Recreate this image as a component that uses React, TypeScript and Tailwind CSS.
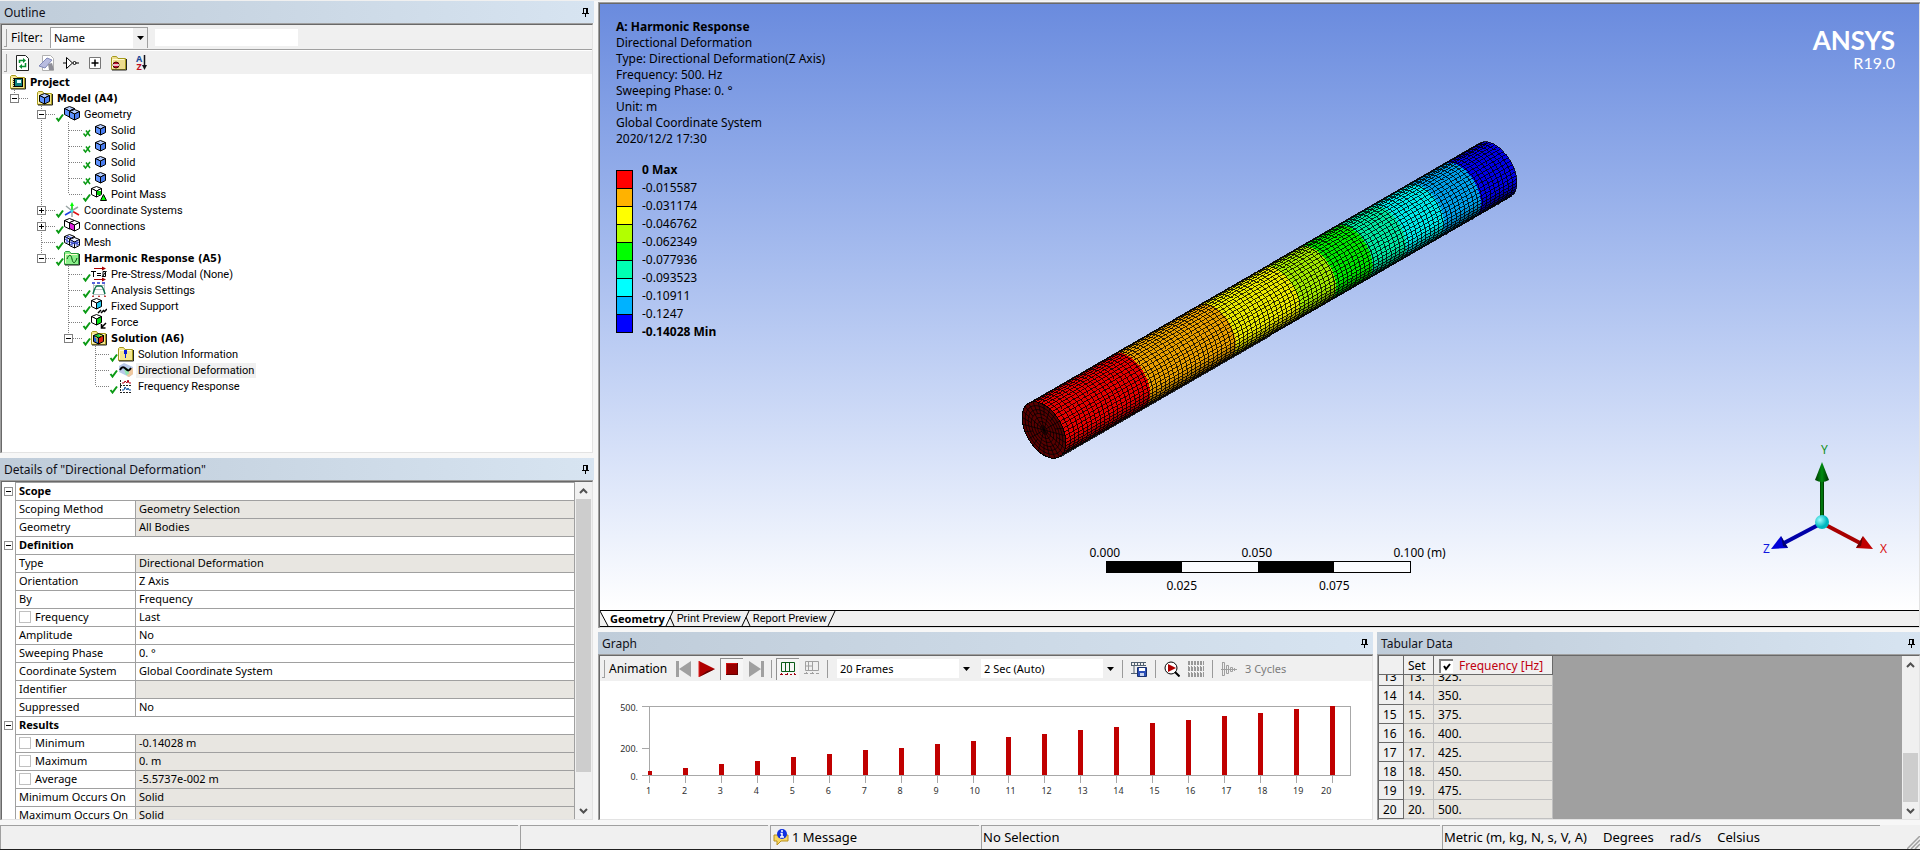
import React, { useState } from 'react';
import clsx from 'clsx';

type Mark = 'check' | 'suppressed';

interface TreeItem {
  label: string;
  icon: React.ReactNode;
  // one entry per level: what the guide column draws
  guides: ('none' | 'line' | 'tee' | 'end')[];
  expander?: 'plus' | 'minus';
  mark?: Mark;
  bold?: boolean;
  selected?: boolean;
}

interface DetailRow {
  label: string;
  value?: string;
  group?: boolean;
  check?: boolean;
  readOnly?: boolean;
}

const UI = "font-['Noto_Sans','Noto_Sans_CJK_SC',sans-serif]";
const TREE = "font-['Roboto','Noto_Sans',sans-serif]";
const TREE_BOLD = "font-['DejaVu_Sans_Condensed','Noto_Sans',sans-serif] font-bold";

/* ---------- icons ---------- */

const Icon: React.FC<{ children: React.ReactNode; size?: number }> = ({ children, size = 16 }) => (
  <svg width={size} height={size} viewBox={`0 0 ${size} ${size}`} className="shrink-0" aria-hidden="true">
    {children}
  </svg>
);

interface CubeProps {
  x?: number;
  y?: number;
  left?: string;
  top?: string;
  right?: string;
}

const Cube: React.FC<CubeProps> = ({ x = 0, y = 0, left = '#5f93ff', top = '#b4ccff', right = '#4a7df0' }) => (
  <g transform={`translate(${x} ${y})`} stroke="#000" strokeWidth="1" strokeLinejoin="round">
    <path d="M.5 2.500 5.500.5l5 2-5 2.500z" fill={top} />
    <path d="M.5 2.500l5 2.500v6l-5-2.500z" fill={left} />
    <path d="M10.500 2.500l-5 2.500v6l5-2.500z" fill={right} />
  </g>
);

const Folder: React.FC<{ fill?: string; edge?: string; children?: React.ReactNode }> = ({
  fill = '#f5e58c',
  edge = '#a59a1c',
  children,
}) => (
  <Icon>
    <path d="M.5 14.500V2.500l1-1h4l1.500 2h7.500v11z" fill={fill} stroke={edge} />
    <path d="M1 15h14.500V4" fill="none" stroke="#222" />
    <path d="M1.500 13V4.500H13" fill="none" stroke="#fffbd0" />
    {children}
  </Icon>
);

const ProjectIcon = () => (
  <Folder>
    <rect x="4.500" y="4.500" width="8" height="8" fill="#0e7f80" stroke="#000" />
    <path d="M3.500 4v10" stroke="#222" strokeWidth="1" strokeDasharray="1 1" />
    <rect x="7" y="6" width="4" height="3" fill="#e8ffff" />
  </Folder>
);

const ModelIcon = () => (
  <Folder>
    <Cube x={2} y={3} />
  </Folder>
);

const GeometryIcon = () => (
  <Icon>
    <Cube x={0} y={0} />
    <Cube x={5} y={3} />
  </Icon>
);

const SolidIcon = () => (
  <Icon>
    <Cube x={4} y={2} />
  </Icon>
);

const PointMassIcon = () => (
  <Icon>
    <Cube x={0} y={0} left="#fff" top="#fff" right="#fff" />
    <path d="M6 5h4v4H6z" fill="#0c0" />
    <path d="M12.500 8.500l3 6h-6z" fill="#0f0" stroke="#000" />
  </Icon>
);

const CoordIcon = () => (
  <Icon>
    <path d="M2 4l5 4M14 5L9 8M8 10v5" stroke="#9aa5a5" strokeWidth="1.500" />
    <path d="M8 9V2" stroke="#0c0" strokeWidth="1.500" />
    <path d="M8 0l2 4H6z" fill="#0f0" />
    <path d="M8 9l-7 4" stroke="#1b3fe0" strokeWidth="1.500" />
    <path d="M8 9l7 4" stroke="#e01010" strokeWidth="1.500" />
    <circle cx="8" cy="9" r="1.500" fill="#3de0e0" />
  </Icon>
);

const ConnectionsIcon = () => (
  <Icon>
    <Cube x={0} y={0} left="#fff" top="#fff" right="#e020e0" />
    <Cube x={5} y={2} left="#e020e0" top="#fff" right="#fff" />
  </Icon>
);

const MeshIcon = () => (
  <Icon>
    <Cube x={0} y={0} left="#eef1ff" top="#eef1ff" right="#eef1ff" />
    <Cube x={5} y={3} left="#eef1ff" top="#eef1ff" right="#eef1ff" />
    <path d="M1 5l4 3M3 3v6M8 6v6M13 6v6M6 8l5 2 4-2M6 11l5-3 4 3M3 2l5 2" stroke="#3346c8" strokeWidth="1" fill="none" />
  </Icon>
);

const HarmonicIcon = () => (
  <Folder fill="#8cf08c" edge="#2c9c3c">
    <path d="M3 9c2-5 4-5 5 0s3 5 5-1" fill="none" stroke="#06540c" strokeWidth="1" />
  </Folder>
);

const PreStressIcon = () => (
  <Icon>
    <path d="M3 2.500h9M3 13.500h9" stroke="#a00" />
    <path d="M11 .5l4 2-4 2zM11 11.500l4 2-4 2z" fill="#a00" />
    <path d="M0 5.500h5M2.500 5v6M6 7.500h4M6 9.500h4M12 5.500h2.500v5H12zM11 11l4.500-6" stroke="#000" fill="none" />
  </Icon>
);

const AnalysisIcon = () => (
  <Icon>
    <path d="M2.500 2v12M13.500 2v12M2 7.500h12M2 12.500h12M2 3.500h12" stroke="#b8c4c4" />
    <path d="M1 1h3M6 1h3M11 1h3" stroke="#2030d0" strokeWidth="1.500" />
    <path d="M2 12c2-7 3-8 4-8h4c1 0 2 1 4 8" fill="none" stroke="#087048" strokeWidth="1.500" />
    <path d="M1 15l1-2 1 2zM7 15l1-2 1 2zM13 15l1-2 1 2z" fill="#a00" />
  </Icon>
);

const FixedIcon = () => (
  <Icon>
    <Cube left="#fff" top="#fff" right="#22c8f0" />
    <path d="M7 15l3-3M10 15l3-3M13 14l3-3" stroke="#000" strokeWidth="1.500" />
  </Icon>
);

const ForceIcon = () => (
  <Icon>
    <Cube left="#fff" top="#fff" right="#00e010" />
    <path d="M15 9l-4 4M10.500 10v4h4" stroke="#000" strokeWidth="1.500" fill="none" />
  </Icon>
);

const SolutionIcon = () => (
  <Folder>
    <Cube x={2} y={3} left="#2060e0" top="#20d040" right="#e02010" />
    <path d="M4 7l2 1v4M8 5l3 1" stroke="#f0e020" fill="none" />
  </Folder>
);

const SolutionInfoIcon = () => (
  <Folder>
    <path d="M7.500 4v4" stroke="#0a18d8" strokeWidth="3" />
    <path d="M7.500 7v5" stroke="#0a18d8" strokeWidth="1" />
  </Folder>
);

const DeformationIcon = () => (
  <Icon>
    <path d="M1 4l5-3 9 4v7l-4 3L1 10z" fill="#b9c9e8" />
    <path d="M9 8l6-2v6l-4 3-2-1z" fill="#f0c8a0" />
    <path d="M6 7l4-1 1 6-3 1z" fill="#90e8b0" />
    <path d="M2 8c2-4 4-3 6-1s3 2 5-1" fill="none" stroke="#000" strokeWidth="2" />
  </Icon>
);

const FrequencyIcon = () => (
  <Icon>
    <path d="M2.500 2v13M2 7.500h12M2 14.500h12" stroke="#222" strokeDasharray="2 1" />
    <path d="M4 5h2l1-2 2 2 1-3 1 3h2" fill="none" stroke="#b00018" />
    <path d="M4 12h2l1-3 2 3 1-2 1 2h2" fill="none" stroke="#1050a0" />
  </Icon>
);

const PinIcon = () => (
  <svg width="8" height="10" viewBox="0 0 8 10" aria-hidden="true" shapeRendering="crispEdges">
    <path d="M1.500 5V.5h4V5" fill="none" stroke="#000" />
    <path d="M4.500 0v5M0 5.500h7M3.500 6v3" stroke="#000" />
  </svg>
);

const Chevron: React.FC<{ down?: boolean }> = ({ down }) => (
  <svg width="9" height="6" viewBox="0 0 9 6" aria-hidden="true">
    <path d={down ? 'M1 1l3.500 3.500L8 1' : 'M1 5l3.500-3.500L8 5'} fill="none" stroke="#505050" strokeWidth="2" />
  </svg>
);

/* ---------- shared bits ---------- */

const PanelTitle: React.FC<{ title: string }> = ({ title }) => (
  <div className="flex h-[22px] shrink-0 items-center justify-between bg-linear-to-r from-[#bfccd9] to-[#d7e4f1] pt-0.5 pl-1">
    <h2 className="text-[12px] leading-4 text-[#101018]">{title}</h2>
    <button type="button" aria-label={`Pin ${title}`} className="flex h-4 w-4 items-center justify-center">
      <PinIcon />
    </button>
  </div>
);

const Grip = () => <div className="h-[18px] w-[3px] shrink-0 border-r border-b border-[#a0a0a0]" />;
const Separator = () => <div className="h-[18px] w-px shrink-0 bg-[#9a9a9a]" />;

interface ComboProps {
  label: string;
  options: string[];
  className?: string;
}

const Combo: React.FC<ComboProps> = ({ label, options, className }) => (
  <div className={clsx('relative flex shrink-0', className)}>
    <select
      aria-label={label}
      className="w-full grow appearance-none bg-white pr-4 pl-[3px] text-[11px] leading-4 text-black outline-none"
    >
      {options.map(option => (
        <option key={option}>{option}</option>
      ))}
    </select>
    <span className="pointer-events-none absolute inset-y-0 right-0 flex w-[14px] items-center justify-center bg-[#f0f0f0]">
      <svg width="7" height="4" viewBox="0 0 7 4">
        <path d="M0 0h7L3.500 4z" fill="#000" />
      </svg>
    </span>
  </div>
);

const ScrollBar: React.FC<{ before: string; thumb: string }> = ({ before, thumb }) => (
  <div className="flex w-[17px] shrink-0 flex-col items-center bg-[#f0f0f0]">
    <div className="flex h-[17px] shrink-0 items-center">
      <Chevron />
    </div>
    <div className="flex w-full grow flex-col">
      <div className={before} />
      <div className={clsx('mx-px bg-[#cdcdcd]', thumb)} />
    </div>
    <div className="flex h-[17px] shrink-0 items-center">
      <Chevron down />
    </div>
  </div>
);

/* ---------- outline ---------- */

const TREE_ITEMS: TreeItem[] = [
  { label: 'Project', icon: <ProjectIcon />, guides: [], bold: true },
  { label: 'Model (A4)', icon: <ModelIcon />, guides: ['end'], expander: 'minus', bold: true },
  { label: 'Geometry', icon: <GeometryIcon />, guides: ['none', 'tee'], expander: 'minus', mark: 'check' },
  { label: 'Solid', icon: <SolidIcon />, guides: ['none', 'line', 'tee'], mark: 'suppressed' },
  { label: 'Solid', icon: <SolidIcon />, guides: ['none', 'line', 'tee'], mark: 'suppressed' },
  { label: 'Solid', icon: <SolidIcon />, guides: ['none', 'line', 'tee'], mark: 'suppressed' },
  { label: 'Solid', icon: <SolidIcon />, guides: ['none', 'line', 'tee'], mark: 'suppressed' },
  { label: 'Point Mass', icon: <PointMassIcon />, guides: ['none', 'line', 'end'], mark: 'check' },
  { label: 'Coordinate Systems', icon: <CoordIcon />, guides: ['none', 'tee'], expander: 'plus', mark: 'check' },
  { label: 'Connections', icon: <ConnectionsIcon />, guides: ['none', 'tee'], expander: 'plus', mark: 'check' },
  { label: 'Mesh', icon: <MeshIcon />, guides: ['none', 'tee'], mark: 'check' },
  { label: 'Harmonic Response (A5)', icon: <HarmonicIcon />, guides: ['none', 'end'], expander: 'minus', mark: 'check', bold: true },
  { label: 'Pre-Stress/Modal (None)', icon: <PreStressIcon />, guides: ['none', 'none', 'tee'], mark: 'check' },
  { label: 'Analysis Settings', icon: <AnalysisIcon />, guides: ['none', 'none', 'tee'], mark: 'check' },
  { label: 'Fixed Support', icon: <FixedIcon />, guides: ['none', 'none', 'tee'], mark: 'check' },
  { label: 'Force', icon: <ForceIcon />, guides: ['none', 'none', 'tee'], mark: 'check' },
  { label: 'Solution (A6)', icon: <SolutionIcon />, guides: ['none', 'none', 'end'], expander: 'minus', mark: 'check', bold: true },
  { label: 'Solution Information', icon: <SolutionInfoIcon />, guides: ['none', 'none', 'none', 'tee'], mark: 'check' },
  { label: 'Directional Deformation', icon: <DeformationIcon />, guides: ['none', 'none', 'none', 'tee'], mark: 'check', selected: true },
  { label: 'Frequency Response', icon: <FrequencyIcon />, guides: ['none', 'none', 'none', 'end'], mark: 'check' },
];

interface GuideProps {
  kind: 'none' | 'line' | 'tee' | 'end';
  expander?: 'plus' | 'minus';
  mark?: Mark;
}

const Guide: React.FC<GuideProps> = ({ kind, expander, mark }) => (
  <svg width="27" height="16" viewBox="0 0 27 16" className="shrink-0 overflow-visible" aria-hidden="true">
    <g stroke="#808080" strokeDasharray="1 1" shapeRendering="crispEdges">
      {(kind === 'line' || kind === 'tee') && <path d="M4.500 0v16" />}
      {kind === 'end' && <path d="M4.500 0v8" />}
      {(kind === 'tee' || kind === 'end') && <path d="M5 8.500h14" />}
    </g>
    {expander && (
      <g shapeRendering="crispEdges">
        <rect x="0.500" y="4.500" width="8" height="8" fill="#fff" stroke="#808080" />
        <path d={expander === 'plus' ? 'M2 8.500h5M4.500 6v5' : 'M2 8.500h5'} stroke="#000" />
      </g>
    )}
    {mark === 'check' && <path d="M19.500 12l2 2.500 4.500-6" fill="none" stroke="#0a9a14" strokeWidth="2" />}
    {mark === 'suppressed' && (
      <path d="M19.500 11.500l2 2.500 4.500-6M22 8.500l4 5.500" fill="none" stroke="#0a9a14" strokeWidth="1.500" />
    )}
  </svg>
);

const OutlinePanel = () => (
  <section className="flex h-[452px] shrink-0 flex-col">
    <PanelTitle title="Outline" />
    <div className="mr-px flex min-h-0 grow flex-col border-t border-l border-[#a0a0a0]">
      <div className="flex min-h-0 grow flex-col border-t border-r border-b border-l border-t-[#696969] border-r-[#e3e3e3] border-b-[#e3e3e3] border-l-[#696969] bg-white">
        <div className="flex h-[25px] shrink-0 items-center border-b border-[#a0a0a0] bg-[#f0f0f0] pt-px pl-[2px]">
          <Grip />
          <label htmlFor="filter-text" className="w-[43px] pl-1 text-[12px] leading-4">
            Filter:
          </label>
          <Combo
            label="Filter by"
            options={['Name', 'Type', 'State']}
            className="h-[21px] w-[98px] border-t border-r border-l border-[#a0a0a0]"
          />
          <input id="filter-text" type="text" className="ml-[7px] h-[17px] w-[143px] bg-white text-[11px] outline-none" />
        </div>
        <div className="flex h-6 shrink-0 items-center border-t border-white bg-[#f0f0f0] pl-[2px]">
          <Grip />
          <div className="flex items-center gap-2 pl-2">
            <button type="button" aria-label="Refresh tree">
              <Icon>
                <path d="M1.500.5h9l3 3v12h-12z" fill="#fff" stroke="#222" />
                <path d="M4.500 8V5.500H9M10.500 8v3.500H6" fill="none" stroke="#089030" strokeWidth="1.500" />
                <path d="M8 3l3 2.500L8 8zM7 9l-3 2.500L7 14z" fill="#089030" />
              </Icon>
            </button>
            <button type="button" aria-label="Clear">
              <Icon>
                <path d="M3.500.5h8l3 3v12h-11z" fill="#fff" stroke="#b0b0b0" />
                <path d="M0 11l8-8 5 2-7 8z" fill="#b8bce0" stroke="#8088b8" />
                <path d="M9 9l4-1 2 7h-5z" fill="#8e8e98" />
              </Icon>
            </button>
            <button type="button" aria-label="Go to">
              <Icon>
                <path d="M3.500 2.500v11L9.500 8z" fill="#fff" stroke="#000" />
                <path d="M0 8h3M13 8h3" stroke="#000" />
                <circle cx="11.500" cy="8" r="1.500" fill="#fff" stroke="#000" />
              </Icon>
            </button>
            <button type="button" aria-label="Expand all">
              <Icon>
                <path d="M2.500 2.500h11v11h-11z" fill="#fff" stroke="#777" />
                <path d="M4.500 8h7M8 4.500v7" stroke="#000" strokeWidth="1.500" />
              </Icon>
            </button>
            <button type="button" aria-label="Hide folders">
              <Folder fill="#eddc8e">
                <circle cx="5" cy="10" r="3" fill="#c01030" stroke="#400" />
                <path d="M2 10h6" stroke="#fff" strokeWidth="1.500" />
              </Folder>
            </button>
            <button type="button" aria-label="Sort" className="flex h-4 w-4 items-center pl-px">
              <span className="flex flex-col text-[9px] leading-[8px] font-bold">
                <span className="text-[#1c4a98]">A</span>
                <span className="text-[#c01020]">Z</span>
              </span>
              <svg width="5" height="15" viewBox="0 0 5 15">
                <path d="M2.500 0v12" stroke="#101018" strokeWidth="1.500" />
                <path d="M0 10h5l-2.500 5z" fill="#101018" />
              </svg>
            </button>
          </div>
        </div>
        <ul className="overflow-hidden pl-2">
          {TREE_ITEMS.map((item, index) => (
            <li key={index} className="flex h-4 items-center">
              {item.guides.map((kind, level) => {
                const own = level === item.guides.length - 1;
                return <Guide key={level} kind={kind} expander={own ? item.expander : undefined} mark={own ? item.mark : undefined} />;
              })}
              {item.icon}
              <span
                className={clsx(
                  'ml-[2px] px-[2px] text-[11px] leading-[15px] whitespace-nowrap',
                  item.bold ? TREE_BOLD : TREE,
                  item.selected && 'bg-[#f0f0f0]'
                )}
              >
                {item.label}
              </span>
            </li>
          ))}
        </ul>
      </div>
    </div>
  </section>
);

/* ---------- details ---------- */

const DETAILS: DetailRow[] = [
  { label: 'Scope', group: true },
  { label: 'Scoping Method', value: 'Geometry Selection', readOnly: true },
  { label: 'Geometry', value: 'All Bodies', readOnly: true },
  { label: 'Definition', group: true },
  { label: 'Type', value: 'Directional Deformation', readOnly: true },
  { label: 'Orientation', value: 'Z Axis' },
  { label: 'By', value: 'Frequency' },
  { label: 'Frequency', value: 'Last', check: true },
  { label: 'Amplitude', value: 'No' },
  { label: 'Sweeping Phase', value: '0. °' },
  { label: 'Coordinate System', value: 'Global Coordinate System' },
  { label: 'Identifier', value: '', readOnly: true },
  { label: 'Suppressed', value: 'No' },
  { label: 'Results', group: true },
  { label: 'Minimum', value: '-0.14028 m', check: true, readOnly: true },
  { label: 'Maximum', value: '0. m', check: true, readOnly: true },
  { label: 'Average', value: '-5.5737e-002 m', check: true, readOnly: true },
  { label: 'Minimum Occurs On', value: 'Solid', readOnly: true },
  { label: 'Maximum Occurs On', value: 'Solid', readOnly: true },
];

const DetailsPanel = () => (
  <section className="flex min-h-0 grow flex-col">
    <PanelTitle title={'Details of "Directional Deformation"'} />
    <div className="mr-px flex min-h-0 grow border-t border-l border-[#a0a0a0]">
      <div className="flex min-h-0 grow border border-t-[#696969] border-r-[#e3e3e3] border-b-[#e3e3e3] border-l-[#696969] bg-white">
        <div className="h-0 min-h-full grow overflow-hidden">
          <table className="w-full table-fixed border-separate border-spacing-0 text-[11px] leading-[15px]">
            <colgroup>
              <col className="w-[13px]" />
              <col className="w-[120px]" />
              <col />
            </colgroup>
            <tbody>
              {DETAILS.map(row => (
                <tr key={row.label} className="h-[18px]">
                  <td className="p-0">
                    {row.group && (
                      <button type="button" aria-label={`Collapse ${row.label}`} className="ml-[2px] flex">
                        <svg width="9" height="9" viewBox="0 0 9 9" shapeRendering="crispEdges">
                          <rect x="0.500" y="0.500" width="8" height="8" fill="#fff" stroke="#909090" />
                          <path d="M2 4.500h5" stroke="#000" />
                        </svg>
                      </button>
                    )}
                  </td>
                  {row.group ? (
                    <th colSpan={2} scope="rowgroup" className="border-t border-r border-l border-[#a0a0a0] pt-0 pr-0 pb-[2px] pl-[3px] text-left font-bold">
                      {row.label}
                    </th>
                  ) : (
                    <>
                      <th scope="row" className="border-t border-l border-[#a0a0a0] pt-0 pr-0 pb-[2px] pl-[3px] text-left font-normal whitespace-nowrap">
                        {row.check ? (
                          <label className="flex items-center gap-1">
                            <input type="checkbox" className="h-3 w-3 appearance-none border border-[#c0c0c0] bg-white" />
                            {row.label}
                          </label>
                        ) : (
                          row.label
                        )}
                      </th>
                      <td
                        className={clsx(
                          'border-t border-r border-l border-[#a0a0a0] pt-0 pr-0 pb-[2px] pl-[3px]',
                          row.readOnly && 'bg-[#e8e6e1]'
                        )}
                      >
                        {row.value}
                      </td>
                    </>
                  )}
                </tr>
              ))}
            </tbody>
          </table>
        </div>
        <ScrollBar before="h-0" thumb="h-[90%]" />
      </div>
    </div>
  </section>
);

/* ---------- 3D scene ---------- */

const RADIUS = 31;
const START = { x: 444, y: 426 };
const END = { x: 895, y: 166 };
const FACETS = 24;
const RINGS = 104;

// shaft colour bands, from the fixed end
const BANDS = [
  { to: 0.187, rgb: [230, 0, 0] },
  { to: 0.377, rgb: [232, 158, 0] },
  { to: 0.518, rgb: [232, 232, 0] },
  { to: 0.599, rgb: [160, 232, 0] },
  { to: 0.68, rgb: [0, 230, 0] },
  { to: 0.755, rgb: [0, 230, 160] },
  { to: 0.839, rgb: [0, 232, 232] },
  { to: 0.92, rgb: [0, 158, 232] },
  { to: 1, rgb: [0, 0, 230] },
];

// point on the section at position t, angle in radians from the upper silhouette edge
const sectionPoint = (t: number, angle: number, scale = 1) => {
  const major = -Math.cos(angle) * RADIUS * scale;
  const minor = Math.sin(angle) * RADIUS * 0.577 * scale;
  const x = START.x + (END.x - START.x) * t + major * 0.5 + minor * 0.866;
  const y = START.y + (END.y - START.y) * t + major * 0.866 - minor * 0.5;
  return `${x.toFixed(1)} ${y.toFixed(1)}`;
};

const facetAngle = (i: number) => (Math.PI * i) / FACETS;

const facets = BANDS.flatMap((band, b) => {
  const from = b === 0 ? 0 : BANDS[b - 1].to;
  return Array.from({ length: FACETS }, (_, i) => {
    const a = facetAngle(i);
    const c = facetAngle(i + 1);
    const light = Math.max(0.3, Math.min(1, 0.3 + 1.1 * Math.sin((a + c) / 2 + 0.25)));
    const [r, g, bl] = band.rgb.map(v => Math.round(v * light));
    return {
      d: `M${sectionPoint(from, a)}L${sectionPoint(band.to, a)}L${sectionPoint(band.to, c)}L${sectionPoint(from, c)}z`,
      fill: `rgb(${r},${g},${bl})`,
    };
  });
});

const ringLines = Array.from({ length: RINGS + 1 }, (_, k) =>
  Array.from({ length: FACETS + 1 }, (_, i) => `${i ? 'L' : 'M'}${sectionPoint(k / RINGS, facetAngle(i))}`).join('')
).join('');

const axialLines = Array.from(
  { length: FACETS + 1 },
  (_, i) => `M${sectionPoint(0, facetAngle(i))}L${sectionPoint(1, facetAngle(i))}`
).join('');

const capRing = (scale: number) =>
  Array.from({ length: FACETS * 2 }, (_, i) => `${i ? 'L' : 'M'}${sectionPoint(0, facetAngle(i), scale)}`).join('') + 'z';

const capSpokes = (step: number, from: number, to: number) =>
  Array.from(
    { length: (FACETS * 2) / step },
    (_, i) => `M${sectionPoint(0, facetAngle(i * step), from)}L${sectionPoint(0, facetAngle(i * step), to)}`
  ).join('');

const capLines =
  [0.86, 0.72, 0.58, 0.44, 0.3, 0.15].map(capRing).join('') + capSpokes(2, 0.58, 1) + capSpokes(4, 0, 0.58);

const Shaft = () => (
  <svg viewBox="0 0 1319 606" className="absolute inset-0 h-full w-full" role="img" aria-label="Deformed shaft mesh">
    <g shapeRendering="crispEdges">
      {facets.map((facet, i) => (
        <path key={i} d={facet.d} fill={facet.fill} />
      ))}
      <path d={ringLines + axialLines} fill="none" stroke="#000" strokeWidth="0.800" />
      <path d={capRing(1)} fill="#580000" stroke="#000" />
    </g>
    <path d={capLines} fill="none" stroke="#000" strokeWidth="0.800" />
  </svg>
);

const LEGEND = ['#ff0000', '#ffb200', '#ffff00', '#b2ff00', '#00ff00', '#00ffb2', '#00ffff', '#00b2ff', '#0000ff'];
const LEGEND_LABELS = [
  '0 Max', '-0.015587', '-0.031174', '-0.046762', '-0.062349',
  '-0.077936', '-0.093523', '-0.10911', '-0.1247', '-0.14028 Min',
];

const RESULT_INFO = [
  'Directional Deformation',
  'Type: Directional Deformation(Z Axis)',
  'Frequency: 500. Hz',
  'Sweeping Phase: 0. °',
  'Unit: m',
  'Global Coordinate System',
  '2020/12/2 17:30',
];

const Triad = () => (
  <svg width="136" height="128" viewBox="0 -8 136 128" className="absolute right-[28px] bottom-[44px]" aria-hidden="true">
    <defs>
      <linearGradient id="axis-y">
        <stop offset="0" stopColor="#003800" />
        <stop offset="0.500" stopColor="#008c10" />
        <stop offset="1" stopColor="#002800" />
      </linearGradient>
      <radialGradient id="origin" cx="0.350" cy="0.350">
        <stop offset="0" stopColor="#a0ffff" />
        <stop offset="1" stopColor="#00b8c0" />
      </radialGradient>
    </defs>
    <rect x="65" y="34" width="4" height="43" fill="url(#axis-y)" />
    <path d="M67 16l7 18q-7 4-14 0z" fill="url(#axis-y)" />
    <path d="M67 77l38 20" stroke="#a80000" strokeWidth="4" />
    <path d="M118 103l-17-1 7-12z" fill="#c00000" />
    <path d="M101 102l7-12-2 10z" fill="#600" />
    <path d="M67 77L29 97" stroke="#0000a8" strokeWidth="4" />
    <path d="M16 103l17-1-7-12z" fill="#0000d8" />
    <path d="M33 102l-7-12 2 10z" fill="#000070" />
    <circle cx="67" cy="76" r="7" fill="url(#origin)" />
    <text x="66" y="8" fontSize="12" fill="#109018" fontFamily="Noto Sans">Y</text>
    <text x="125" y="107" fontSize="12" fill="#d81010" fontFamily="Noto Sans">X</text>
    <text x="8" y="107" fontSize="12" fill="#1018e0" fontFamily="Noto Sans">Z</text>
  </svg>
);

const ScaleBar = () => (
  <div className="absolute bottom-[16px] left-1/2 ml-[-170px] w-[380px] text-[12px] leading-4">
    <div className="grid grid-cols-[152px_152px_auto]">
      <span>0.000</span>
      <span>0.050</span>
      <span>0.100 (m)</span>
    </div>
    <div className="ml-[16px] grid h-3 w-[305px] grid-cols-4 border border-black bg-white/50">
      <div className="bg-black" />
      <div />
      <div className="bg-black" />
      <div />
    </div>
    <div className="mt-[5px] ml-[16px] flex w-[305px] justify-around">
      <span>0.025</span>
      <span>0.075</span>
    </div>
  </div>
);

const VIEW_TABS = ['Geometry', 'Print Preview', 'Report Preview'];

const Viewport = () => {
  const [active, setActive] = useState('Geometry');

  return (
    <section className="mt-px flex min-h-0 grow flex-col border-t border-l border-[#a0a0a0]">
      <div className="flex min-h-0 grow flex-col border-t border-r border-b border-l border-t-[#696969] border-r-[#e3e3e3] border-b-[#e3e3e3] border-l-[#696969]">
        <div className="relative min-h-0 grow overflow-hidden bg-linear-to-b from-[#6a8bde] to-white pt-[15px] pl-4">
          <Shaft />
          <div className="relative text-[12px] leading-4">
            <p className="font-bold">A: Harmonic Response</p>
            {RESULT_INFO.map(line => (
              <p key={line}>{line}</p>
            ))}
          </div>
          <div className="relative mt-4 flex">
            <div className="mt-[7px] flex h-[163px] w-[17px] flex-col border border-black">
              {LEGEND.map((color, i) => (
                <div key={color} className={clsx('flex-1', i > 0 && 'border-t border-black')} style={{ backgroundColor: color }} />
              ))}
            </div>
            <ul className="-mt-px ml-[9px] flex h-[178px] flex-col justify-between text-[12px] leading-4">
              {LEGEND_LABELS.map((label, i) => (
                <li key={label} className={clsx((i === 0 || i === LEGEND_LABELS.length - 1) && 'font-bold')}>
                  {label}
                </li>
              ))}
            </ul>
          </div>
          <div className="absolute top-[20px] right-[24px] text-right font-['Lato','Noto_Sans',sans-serif] text-white">
            <div className="text-[26px] leading-[32px] font-bold">ANSYS</div>
            <div className="text-[16px] leading-[14px]">R19.0</div>
          </div>
          <ScaleBar />
          <Triad />
        </div>
        <div className="flex h-[17px] shrink-0 border-t border-b border-black bg-[#f0f0f0]" role="tablist">
          {VIEW_TABS.map((tab, i) => (
            <button
              key={tab}
              type="button"
              role="tab"
              aria-selected={tab === active}
              onClick={() => setActive(tab)}
              className={clsx(
                'relative flex h-[15px] items-center text-[11px] leading-[14px] whitespace-nowrap',
                i === 0 && 'pl-[10px]',
                tab === active ? 'bg-white font-bold' : `${TREE} bg-[#f0f0f0]`
              )}
            >
              {i === 0 && (
                <svg width="9" height="15" viewBox="0 0 9 15" className="absolute top-0 left-0">
                  <path d="M0 0v15h8z" fill="#f0f0f0" />
                  <path d="M0 0l8 15" stroke="#000" />
                </svg>
              )}
              {tab}
              <svg width="12" height="15" viewBox="0 0 12 15">
                <path d="M8 0L1 15h11V0z" fill="#f0f0f0" />
                <path d="M8 0L1 15" stroke="#000" />
                {i < VIEW_TABS.length - 1 && <path d="M5 6l4 9" stroke="#000" />}
              </svg>
            </button>
          ))}
        </div>
      </div>
    </section>
  );
};

/* ---------- graph ---------- */

const FREQUENCIES = Array.from({ length: 20 }, (_, i) => (i + 1) * 25);

const Chart = () => (
  <svg viewBox="0 0 773 137" className="min-h-0 w-full grow" role="img" aria-label="Frequency by set">
    <g stroke="#a8a8a8" shapeRendering="crispEdges">
      <path d="M42 24.500h709.500v70H42M49.500 24v71M42 66.500h7" fill="none" />
      {FREQUENCIES.map((_, i) => (
        <path key={i} d={`M${49.5 + i * 36} 95v7`} />
      ))}
    </g>
    <g fill="#c00000" shapeRendering="crispEdges">
      {FREQUENCIES.map((value, i) => {
        const height = Math.round((value / 500) * 70);
        return <rect key={value} x={i === 0 ? 48 : 47 + i * 36} y={94 - height} width={i === 0 ? 4 : 5} height={height} />;
      })}
    </g>
    <g fontSize="9" fill="#303030" fontFamily="Noto Sans">
      <text x="38" y="29" textAnchor="end">500.</text>
      <text x="38" y="71" textAnchor="end">200.</text>
      <text x="38" y="99" textAnchor="end">0.</text>
      {FREQUENCIES.map((_, i) => (
        <text key={i} x={i === 19 ? 722 : 46 + i * 36} y="113">
          {i + 1}
        </text>
      ))}
    </g>
  </svg>
);

const GraphPanel = () => (
  <section className="flex min-w-0 flex-[775] flex-col">
    <PanelTitle title="Graph" />
    <div className="flex min-h-0 grow border-t border-l border-[#a0a0a0]">
      <div className="flex min-w-0 grow flex-col border border-t-[#696969] border-r-[#e3e3e3] border-b-[#e3e3e3] border-l-[#696969] bg-white">
        <div className="flex h-[25px] shrink-0 items-center bg-[#f0f0f0] pl-[2px]">
          <Grip />
          <span className="w-[69px] pl-1 text-[12px] leading-4">Animation</span>
          <button type="button" aria-label="Previous frame" className="w-6">
            <Icon size={18}>
              <path d="M2 1h3v16H2zM17 1v16L5 9z" fill="#a0a0a0" />
            </Icon>
          </button>
          <button type="button" aria-label="Play" className="w-[22px]">
            <Icon size={18}>
              <path d="M1 1l16 8L1 17z" fill="#b00000" />
              <path d="M1 17l16-8-8 2z" fill="#600000" />
              <path d="M1 1v16" stroke="#e02020" />
            </Icon>
          </button>
          <button
            type="button"
            aria-label="Stop"
            className="flex h-[22px] w-[23px] items-center justify-center border-t border-l border-[#909090] bg-[#f6f6f6]"
          >
            <Icon size={12}>
              <path d="M0 0h12v12H0z" fill="#980000" />
              <path d="M0 12V0h12" fill="none" stroke="#d01010" strokeWidth="2" />
              <path d="M0 11.500h11.500V0" fill="none" stroke="#600" />
            </Icon>
          </button>
          <button type="button" aria-label="Next frame" className="w-7 pl-[5px]">
            <Icon size={18}>
              <path d="M13 1h3v16h-3zM1 1v16l12-8z" fill="#a0a0a0" />
            </Icon>
          </button>
          <Separator />
          <button
            type="button"
            aria-label="Distributed"
            className="ml-1 flex h-[22px] w-[23px] items-center justify-center border-t border-l border-[#909090] bg-[#f6f6f6]"
          >
            <Icon>
              <path d="M1.500 10.500v-9h13v9zM5.500 1v10M9.500 1v10" fill="none" stroke="#0a5a18" />
              <path d="M0 13.500h3M5 13.500h3M10 13.500h2M14 13.500h2M1.500 12v2M7.500 12v2M14.500 12v2" stroke="#a00010" />
            </Icon>
          </button>
          <button type="button" aria-label="Result sets" className="w-[28px] pl-[5px]">
            <Icon>
              <path d="M1.500 9.500v-9h13v9zM4.500 1v9M8.500 1v9M2 5h6" fill="none" stroke="#a0a0a0" />
              <path d="M0 12.500h4M6 12.500h4M12 12.500h3M2.500 11v2M8.500 11v2" stroke="#a0a0a0" />
            </Icon>
          </button>
          <Separator />
          <Combo label="Frames" options={['20 Frames', '10 Frames', '50 Frames']} className="ml-[9px] h-[19px] w-[136px]" />
          <Combo label="Duration" options={['2 Sec (Auto)', '5 Sec']} className="ml-[8px] h-[19px] w-[136px]" />
          <div className="ml-[5px] flex items-center gap-2 text-[11px] leading-4">
            <Separator />
            <button type="button" aria-label="Export video">
              <Icon>
                <path d="M0 1.500h15M0 4.500h15" stroke="#506070" />
                <path d="M0 3h15" stroke="#506070" strokeWidth="2" strokeDasharray="1 2" />
                <path d="M3 5v7M0 12.500h6" stroke="#506070" />
                <path d="M6.500 6.500h9v9h-9z" fill="#2c50b8" stroke="#18306c" />
                <path d="M8 7h6v3H8z" fill="#fff" />
                <path d="M9 12h4v3H9z" fill="#c8d4f0" />
              </Icon>
            </button>
            <Separator />
            <button type="button" aria-label="Zoom to fit">
              <Icon>
                <circle cx="7" cy="7" r="6" fill="#fff" stroke="#000" />
                <path d="M4 3l8 4-8 4z" fill="#b00000" />
                <path d="M11 11l4.500 4.500" stroke="#000" strokeWidth="2" />
              </Icon>
            </button>
            <button type="button" aria-label="Contour grid">
              <Icon>
                <path d="M0 2h16M0 8h16M0 14h16" stroke="#989898" strokeWidth="4" strokeDasharray="2 1" />
                <path d="M0 5.500h16M0 11.500h16" stroke="#989898" strokeDasharray="1 2" />
              </Icon>
            </button>
            <Separator />
            <button type="button" disabled aria-label="Cycles">
              <Icon>
                <path d="M1.500 1v14M1.500 1.500h2v13h-2M5.500 4.500h2v8h-2zM9.500 6.500h2v4h-2zM0 8.500h16M13.500 7v3" fill="none" stroke="#a0a0a0" />
              </Icon>
            </button>
            <span className="text-[#7c7c7c]">3 Cycles</span>
          </div>
        </div>
        <Chart />
      </div>
    </div>
  </section>
);

/* ---------- tabular data ---------- */

const TabularPanel = () => (
  <section className="flex min-w-0 flex-[543] flex-col">
    <PanelTitle title="Tabular Data" />
    <div className="flex min-h-0 grow border-t border-l border-[#a0a0a0]">
      <div className="flex min-w-0 grow border border-t-[#696969] border-r-[#e3e3e3] border-b-[#e3e3e3] border-l-[#696969] bg-[#a0a0a0]">
        <div className="flex min-h-0 grow flex-col justify-end overflow-hidden">
          <table className="w-[174px] table-fixed border-separate border-spacing-0 text-[12px] leading-4">
            <colgroup>
              <col className="w-[25px]" />
              <col className="w-[30px]" />
              <col />
            </colgroup>
            <thead>
              <tr className="h-[19px] bg-[#f0f0f0]">
                <th aria-label="Row" className="border-r border-b border-[#696969] p-0" />
                <th className="border-r border-b border-[#696969] pt-0.5 pr-0 pb-0 pl-1 text-left font-normal">Set</th>
                <th className="border-r border-b border-[#696969] pt-0.5 pr-0 pb-0 pl-[5px] text-left font-normal">
                  <label className="flex items-center gap-[6px] text-[#c00010]">
                    <span className="relative h-[14px] w-[14px]">
                      <input
                        type="checkbox"
                        defaultChecked
                        className="block h-[14px] w-[14px] appearance-none border-t-2 border-l-2 border-[#808080] bg-white"
                      />
                      <svg width="8" height="8" viewBox="0 0 8 8" className="pointer-events-none absolute top-1 left-1">
                        <path d="M1 3l2 3 4-5" fill="none" stroke="#000" strokeWidth="2" />
                      </svg>
                    </span>
                    Frequency [Hz]
                  </label>
                </th>
              </tr>
            </thead>
            <tbody>
              {FREQUENCIES.slice(12).map((value, i) => (
                <tr key={value} className={i === 0 ? 'h-[11px]' : 'h-[19px]'}>
                  <th scope="row" className="border-r border-b border-[#696969] bg-[#f0f0f0] py-0 pr-0 pl-1 text-left font-normal">
                    <div className={clsx('flex items-end overflow-hidden', i === 0 ? 'h-[10px]' : 'h-[18px]')}>{i + 13}</div>
                  </th>
                  <td className="border-r border-b border-[#c0c0c0] bg-[#e8e6e1] py-0 pr-0 pl-1">
                    <div className={clsx('flex items-end overflow-hidden', i === 0 ? 'h-[10px]' : 'h-[18px]')}>{i + 13}.</div>
                  </td>
                  <td className="border-r border-b border-[#c0c0c0] bg-[#e8e6e1] py-0 pr-0 pl-1">
                    <div className={clsx('flex items-end overflow-hidden', i === 0 ? 'h-[10px]' : 'h-[18px]')}>{value}.</div>
                  </td>
                </tr>
              ))}
            </tbody>
          </table>
        </div>
        <ScrollBar before="grow" thumb="h-[49px]" />
      </div>
    </div>
  </section>
);

/* ---------- status bar ---------- */

const Pane: React.FC<{ className: string; children?: React.ReactNode }> = ({ className, children }) => (
  <div className={clsx('flex h-6 items-center border-t border-l border-[#a0a0a0] pb-px', className)}>{children}</div>
);

const StatusBar = () => (
  <footer className="flex h-[25px] shrink-0 gap-[2px] border-b border-[#202020] bg-[#f0f0f0] text-[13px] leading-4">
    <Pane className="w-[518px]" />
    <Pane className="w-[248px]" />
    <Pane className="w-[209px] gap-[3px] pl-[2px]">
      <Icon>
        <path d="M1 6h14v6H8l-4 4v-4H1z" fill="#f8d860" stroke="#b89020" />
        <circle cx="9" cy="5" r="5" fill="#1030e0" />
        <path d="M9 1v2M7.500 4.500H9V8M7 8h4" stroke="#fff" strokeWidth="1.500" fill="none" />
      </Icon>
      1 Message
    </Pane>
    <Pane className="grow pl-px">No Selection</Pane>
    <Pane className="w-[438px] gap-4 pl-px">
      <span>Metric (m, kg, N, s, V, A)</span>
      <span>Degrees</span>
      <span>rad/s</span>
      <span>Celsius</span>
    </Pane>
    <div className="flex w-[38px] items-end justify-end">
      <svg width="13" height="13" viewBox="0 0 13 13" aria-hidden="true">
        <path d="M0 13L13 0M4 13l9-9M8 13l5-5" stroke="#a0a0a0" strokeWidth="1.500" />
      </svg>
    </div>
  </footer>
);

const App: React.FC = () => (
  <div className={`${UI} flex h-screen min-h-[850px] flex-col overflow-hidden bg-[#f7f7f7] text-black`}>
    <main className="flex min-h-0 grow gap-1 border-t border-[#f0f0f0] pb-[5px]">
      <div className="flex w-[594px] shrink-0 flex-col gap-[5px]">
        <OutlinePanel />
        <DetailsPanel />
      </div>
      <div className="flex min-w-0 grow flex-col gap-1">
        <Viewport />
        <div className="flex h-[188px] shrink-0 gap-1">
          <GraphPanel />
          <TabularPanel />
        </div>
      </div>
    </main>
    <StatusBar />
  </div>
);

export default App;
